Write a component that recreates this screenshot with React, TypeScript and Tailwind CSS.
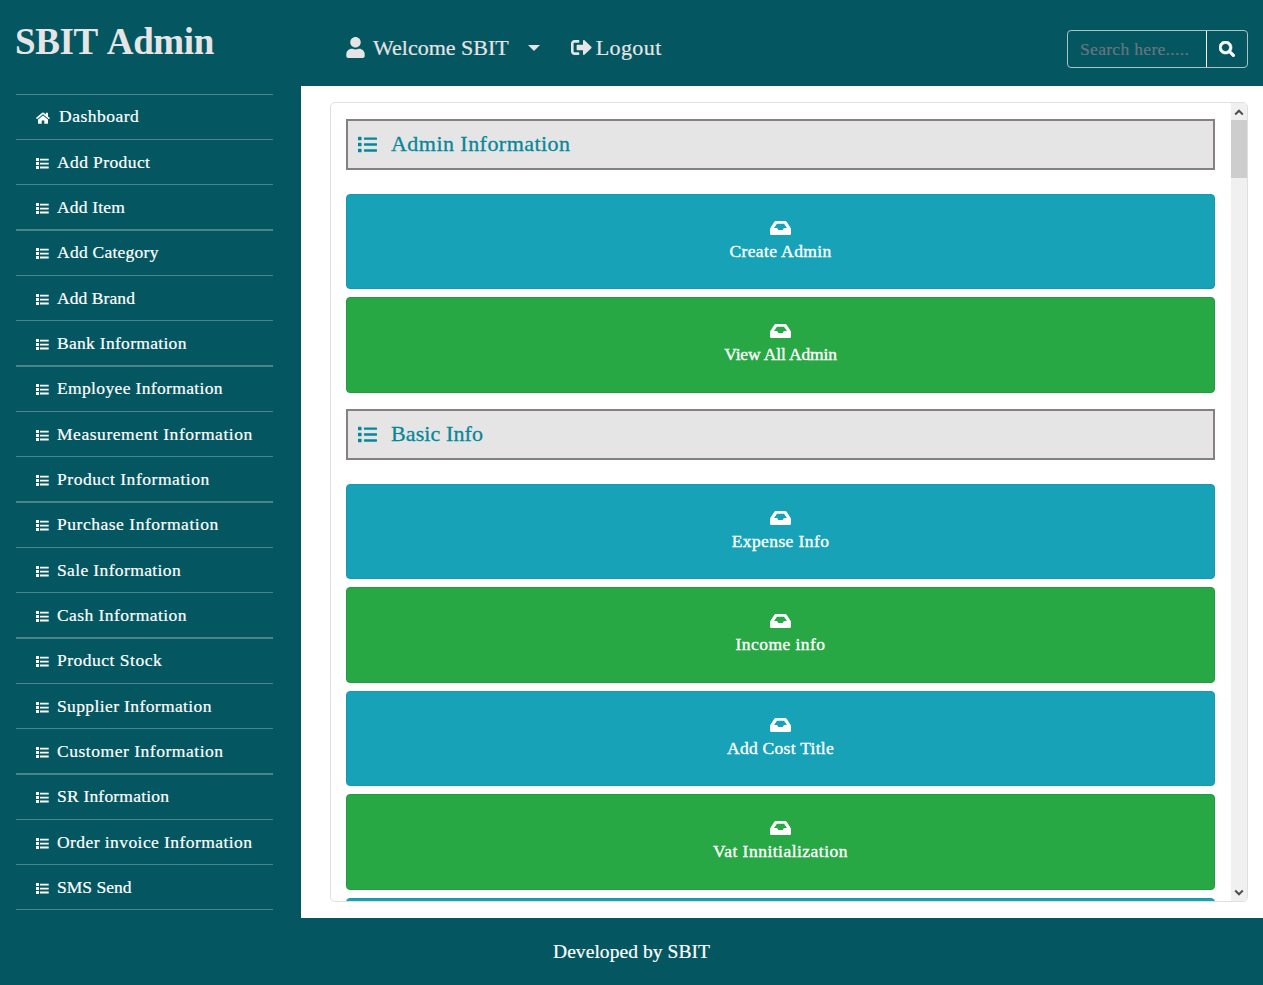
import { FaUser, FaList, FaSearch } from "react-icons/fa";

type Item = { label: string; tracking: string };

const menu: Item[] = [
  { label: "Dashboard", tracking: "tracking-[0.5px]" },
  { label: "Add Product", tracking: "tracking-[0.4px]" },
  { label: "Add Item", tracking: "tracking-[0.18px]" },
  { label: "Add Category", tracking: "tracking-[0.25px]" },
  { label: "Add Brand", tracking: "tracking-[0.08px]" },
  { label: "Bank Information", tracking: "tracking-[0.3px]" },
  { label: "Employee Information", tracking: "tracking-[0.35px]" },
  { label: "Measurement Information", tracking: "tracking-[0.55px]" },
  { label: "Product Information", tracking: "tracking-[0.55px]" },
  { label: "Purchase Information", tracking: "tracking-[0.53px]" },
  { label: "Sale Information", tracking: "tracking-[0.37px]" },
  { label: "Cash Information", tracking: "tracking-[0.43px]" },
  { label: "Product Stock", tracking: "tracking-[0.5px]" },
  { label: "Supplier Information", tracking: "tracking-[0.38px]" },
  { label: "Customer Information", tracking: "tracking-[0.53px]" },
  { label: "SR Information", tracking: "tracking-[0.2px]" },
  { label: "Order invoice Information", tracking: "tracking-[0.43px]" },
  { label: "SMS Send", tracking: "tracking-[0px]" },
];

const adminTiles: Item[] = [
  { label: "Create Admin", tracking: "tracking-[0.38px]" },
  { label: "View All Admin", tracking: "tracking-[-0.15px]" },
];

const basicTiles: Item[] = [
  { label: "Expense Info", tracking: "tracking-[0.4px]" },
  { label: "Income info", tracking: "tracking-[0.45px]" },
  { label: "Add Cost Title", tracking: "tracking-[0.28px]" },
  { label: "Vat Innitialization", tracking: "tracking-[0.48px]" },
  { label: "", tracking: "" },
];

function HomeIcon() {
  return (
    <svg viewBox="0 0 14 12" className="h-3 w-3.5 shrink-0 fill-white">
      <path d="M7 3.4 2 7.5v3.8c0 .3.2.5.5.5h3.2V8.6h2.6v3.2h3.2c.3 0 .5-.2.5-.5V7.5z" />
      <path d="M13.8 6 12 4.5V1c0-.2-.1-.3-.3-.3h-1.6c-.2 0-.3.1-.3.3v1.5L7.9.8a1.4 1.4 0 0 0-1.8 0L.2 5.8c-.2.1-.2.4 0 .5l.6.8c.1.1.3.1.5 0L7 2.3l5.7 4.8c.2.1.4.1.5 0l.6-.8c.2-.1.2-.2 0-.3z" />
    </svg>
  );
}

function MenuListIcon() {
  return (
    <svg viewBox="0 0 13 11" className="h-[11px] w-[13px] shrink-0 fill-white">
      <path d="M0 0h3v3H0zM0 4h3v3H0zM0 8h3v3H0zM4 .8h8.7v1.8H4zM4 4.7h8.7v1.7H4zM4 8.6h8.7v1.8H4z" />
    </svg>
  );
}

function InboxIcon() {
  return (
    <svg viewBox="0 0 21 14" className="h-3.5 w-[21px] shrink-0 fill-white">
      <path
        fillRule="evenodd"
        d="M6 0H15Q16.2 0 16.8 .9L20.5 6.7Q21 7.5 21 8.3V12.5Q21 14 19.5 14H1.5Q0 14 0 12.5V8.3Q0 7.500 .5 6.700L4.200 .9Q4.800 0 6 0ZM7 2.800L4 7H7.100L8.300 9H12.700L13.900 7H17L14 2.800Z"
      />
    </svg>
  );
}

function LogoutIcon() {
  return (
    <svg viewBox="0 0 21 15" className="ml-[31px] h-[15px] w-[21px] shrink-0 fill-current">
      <path d="M3.6 0h4c.4 0 .7.3.7.7v1.3c0 .4-.3.7-.7.7h-4c-.6 0-1 .4-1 1v7.6c0 .6.4 1 1 1h4c.4 0 .7.3.7.7v1.3c0 .4-.3.7-.7.7h-4C1.6 15 0 13.4 0 11.4V3.6C0 1.6 1.6 0 3.6 0z" />
      <path d="M20.3 8.2l-6.6 6.4c-.6.6-1.7.2-1.7-.7v-3.6H6.6c-.6 0-1-.4-1-1V5.7c0-.6.4-1 1-1H12V1.1c0-.9 1.1-1.3 1.7-.7l6.6 6.4c.4.4.4 1 0 1.4z" />
    </svg>
  );
}

function Sidebar() {
  return (
    <aside className="w-[301px] shrink-0 pl-4">
      <ul className="mt-2 w-[257px] border-t border-[#4b858c]">
        {menu.map((item, i) => {
          const thick = i % 3 === 2 && i !== menu.length - 1;
          return (
            <li
              key={item.label}
              className={`flex items-center border-[#4b858c] pl-5 ${thick ? "h-[46px] border-b-2" : "h-[45px] border-b"} ${i % 3 === 0 ? "pb-0.5" : ""}`}
            >
              <span className={`pt-[3px] ${i === 0 ? "mr-[9px]" : "mr-2"}`}>{i === 0 ? <HomeIcon /> : <MenuListIcon />}</span>
              <a className={`text-[17.5px] leading-6 whitespace-nowrap [-webkit-text-stroke:0.2px] ${item.tracking}`}>{item.label}</a>
            </li>
          );
        })}
      </ul>
    </aside>
  );
}

function SectionTitle({ label, tracking }: Item) {
  return (
    <h2 className="flex h-[51px] shrink-0 items-center border-2 border-[#868082] bg-[#e5e5e5] pl-2.5 text-[22px] leading-6 text-[#068799] [-webkit-text-stroke:0.3px]">
      <FaList className="mr-[14px] size-[19px]" />
      <span className={`pb-px ${tracking}`}>{label}</span>
    </h2>
  );
}

function Tiles({ items }: { items: Item[] }) {
  return (
    <div className="mt-6 flex flex-col gap-2">
      {items.map((t, i) => (
        <button
          key={i}
          className={`flex h-[95.45px] w-full shrink-0 flex-col items-center rounded border pt-[26px] ${i % 2 === 0 ? "border-[#1799ad] bg-[#18a2b8]" : "border-[#259a40] bg-[#28a745]"}`}
        >
          <InboxIcon />
          <span className={`mt-1 text-[17.5px] leading-6 [-webkit-text-stroke:0.35px] ${t.tracking}`}>{t.label}</span>
        </button>
      ))}
    </div>
  );
}

function Scrollbar() {
  return (
    <div className="flex w-4 shrink-0 flex-col items-center bg-[#f0f0f0]">
      <svg viewBox="0 0 16 17" className="h-[17px] w-4 shrink-0 fill-none stroke-[#505050] stroke-2">
        <path d="M4.2 11.5 8 7.7l3.8 3.8" />
      </svg>
      <div className="h-[58px] w-full bg-[#cdcdcd]" />
      <svg viewBox="0 0 16 17" className="mt-auto h-[17px] w-4 shrink-0 fill-none stroke-[#505050] stroke-2">
        <path d="M4.2 6.5 8 10.3l3.8-3.8" />
      </svg>
    </div>
  );
}

export default function App() {
  return (
    <div className="flex h-[985px] w-[1263px] flex-col overflow-hidden bg-[#045661] font-['Liberation_Serif',serif] text-white">
      <header className="flex h-[86px] shrink-0 text-[#e5e5e5]">
        <h1 className="w-[301px] pt-[18px] pl-[15px] text-[37px] leading-[48px] font-bold tracking-[-0.4px] [word-spacing:3px]">SBIT Admin</h1>
        <nav className="flex h-[95px] items-center pl-[45px] text-[22px] leading-6 [-webkit-text-stroke:0.2px]">
          <FaUser className="h-[21px] w-[19px]" />
          <span className="ml-2 pt-px">Welcome SBIT</span>
          <svg viewBox="0 0 12 6" className="ml-[19px] h-1.5 w-3 fill-current">
            <path d="M0 0h12L6 6z" />
          </svg>
          <LogoutIcon />
          <span className="ml-1 pt-px tracking-[0.4px]">Logout</span>
        </nav>
        <form className="mt-[30px] mr-[15px] ml-auto flex h-[38px] w-[181px] rounded border border-[#a9c3c7] text-[17.5px]">
          <input
            placeholder="Search here....."
            className="w-[139px] border-r border-white bg-transparent pl-3 tracking-[0.32px] outline-none [-webkit-text-stroke:0.2px] placeholder:text-[#6c757d]"
          />
          <button type="button" className="flex flex-1 items-center justify-center text-white">
            <FaSearch className="size-4 stroke-current stroke-[20]" />
          </button>
        </form>
      </header>
      <div className="flex h-[832px] shrink-0">
        <Sidebar />
        <main className="flex-1 bg-white pt-4 pr-[15px] pl-[29px]">
          <div className="flex h-[800px] overflow-hidden rounded-[5px] border border-[#dfdfdf]">
            <div className="flex-1 overflow-hidden pt-[15.9px] pr-4 pl-[15px]">
              <SectionTitle label="Admin Information" tracking="tracking-[0.46px]" />
              <Tiles items={adminTiles} />
              <div className="h-4" />
              <SectionTitle label="Basic Info" tracking="tracking-[0.1px]" />
              <Tiles items={basicTiles} />
            </div>
            <Scrollbar />
          </div>
        </main>
      </div>
      <footer className="flex flex-1 items-center justify-center text-[19.5px] tracking-[0.06px] [-webkit-text-stroke:0.2px]">Developed by SBIT</footer>
    </div>
  );
}
